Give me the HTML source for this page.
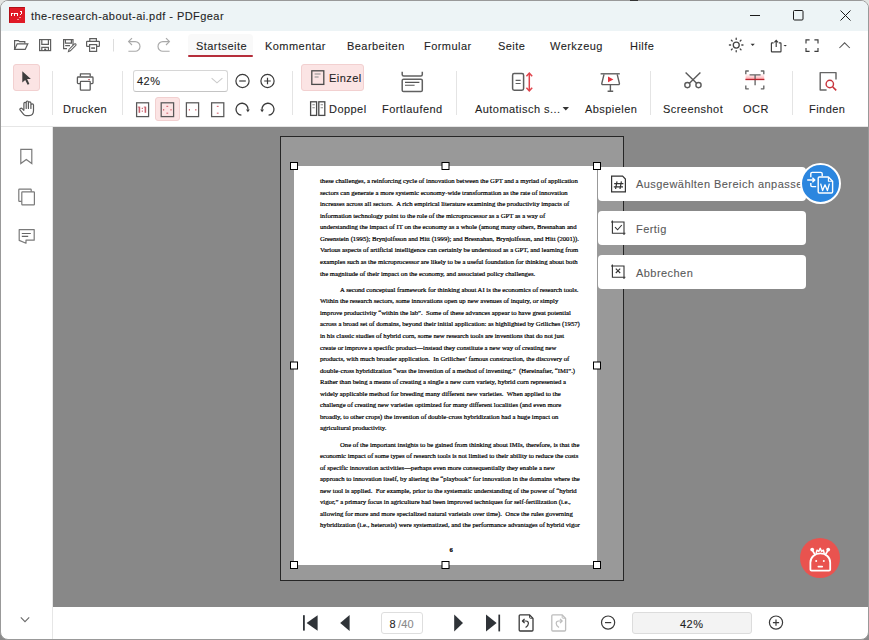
<!DOCTYPE html>
<html><head><meta charset="utf-8">
<style>
*{margin:0;padding:0;box-sizing:border-box}
html,body{width:869px;height:640px;overflow:hidden;background:linear-gradient(#e2e4e2,#e2e4e2 40%,#8a8a8a)}
body{font-family:"Liberation Sans",sans-serif;color:#1a1a1a;position:relative}
.a{position:absolute}
.t{position:absolute;font-size:11px;letter-spacing:0.45px;line-height:14px;white-space:nowrap;color:#1f1f1f;-webkit-text-stroke:0.1px currentColor}
svg{position:absolute;overflow:visible}
.doc{position:absolute;font-family:"Liberation Serif",serif;font-size:6.7px;line-height:8px;white-space:nowrap;color:#000;-webkit-text-stroke:0.2px #000}
</style></head><body>
<!-- window -->
<div class="a" style="left:0;top:0;width:869px;height:640px;background:#fff;border-radius:8px;border:1px solid #999"></div>
<div class="a" style="left:630px;top:0;width:8px;height:1px;background:#333"></div>
<!-- title bar -->
<div class="a" style="left:1px;top:1px;width:867px;height:30px;background:#edf4f6;border-radius:7px 7px 0 0"></div>
<div class="t" style="left:31px;top:9px">the-research-about-ai.pdf - PDFgear</div>

<!-- menu row -->
<div class="a" style="left:188px;top:34px;width:65px;height:22px;background:#f9f9f9;border-radius:4px 4px 0 0"></div>
<div class="t" style="left:196px;top:38.5px">Startseite</div>
<div class="a" style="left:188px;top:55px;width:65px;height:2px;background:#b52d3a;border-radius:1px"></div>
<div class="t" style="left:265px;top:38.5px">Kommentar</div>
<div class="t" style="left:347px;top:38.5px">Bearbeiten</div>
<div class="t" style="left:424px;top:38.5px">Formular</div>
<div class="t" style="left:498px;top:38.5px">Seite</div>
<div class="t" style="left:550px;top:38.5px">Werkzeug</div>
<div class="t" style="left:630px;top:38.5px">Hilfe</div>

<!-- toolbar -->
<div class="a" style="left:13px;top:64px;width:27px;height:27px;background:#fbe4e4;border:1px solid #f2d0d0;border-radius:3px"></div>
<div class="a" style="left:52px;top:71px;width:1px;height:44px;background:#e4e4e4"></div>
<div class="t" style="left:63px;top:102px">Drucken</div>
<div class="a" style="left:122px;top:71px;width:1px;height:44px;background:#e4e4e4"></div>
<div class="a" style="left:133px;top:70px;width:95px;height:22px;border:1px solid #d6d6d6;border-bottom-color:#c4c4c4;border-radius:3px;background:#fff"></div>
<div class="t" style="left:137px;top:74px">42%</div>
<div class="a" style="left:155px;top:97px;width:25px;height:24px;background:#fbe4e4;border:1px solid #f2d0d0;border-radius:3px"></div>
<div class="a" style="left:292px;top:71px;width:1px;height:44px;background:#e4e4e4"></div>
<div class="a" style="left:301px;top:64px;width:63px;height:27px;background:#fbe4e4;border:1px solid #f2d0d0;border-radius:3px"></div>
<div class="t" style="left:329px;top:71px">Einzel</div>
<div class="t" style="left:329px;top:102px">Doppel</div>
<div class="t" style="left:382px;top:102px">Fortlaufend</div>
<div class="a" style="left:456px;top:71px;width:1px;height:44px;background:#e4e4e4"></div>
<div class="t" style="left:475px;top:102px">Automatisch s...</div>
<div class="t" style="left:585px;top:102px">Abspielen</div>
<div class="a" style="left:650px;top:71px;width:1px;height:44px;background:#e4e4e4"></div>
<div class="t" style="left:663px;top:102px">Screenshot</div>
<div class="t" style="left:743px;top:102px">OCR</div>
<div class="a" style="left:792px;top:71px;width:1px;height:44px;background:#e4e4e4"></div>
<div class="t" style="left:809px;top:102px">Finden</div>
<div class="a" style="left:1px;top:126px;width:867px;height:1px;background:#e6e6e6"></div>

<!-- canvas -->
<div class="a" style="left:53px;top:127px;width:815px;height:480px;background:#888"></div>
<div class="a" style="left:52px;top:127px;width:1px;height:512px;background:#e6e6e6"></div>
<!-- page -->
<div class="a" style="left:280px;top:136px;width:344px;height:445px;background:#999;border:1.5px solid #262626"></div>
<div class="a" style="left:294px;top:166px;width:303px;height:399px;background:#fff"></div>
<div class="doc" style="left:320px;top:177.00px">these challenges, a reinforcing cycle of innovation between the GPT and a myriad of application</div>
<div class="doc" style="left:320px;top:188.56px">sectors can generate a more systemic economy-wide transformation as the rate of innovation</div>
<div class="doc" style="left:320px;top:200.12px">increases across all sectors.&nbsp; A rich empirical literature examining the productivity impacts of</div>
<div class="doc" style="left:320px;top:211.69px">information technology point to the role of the microprocessor as a GPT as a way of</div>
<div class="doc" style="left:320px;top:223.25px">understanding the impact of IT on the economy as a whole (among many others, Bresnahan and</div>
<div class="doc" style="left:320px;top:234.81px">Greenstein (1995); Brynjolfsson and Hitt (1999); and Bresnahan, Brynjolfsson, and Hitt (2001)).</div>
<div class="doc" style="left:320px;top:246.38px">Various aspects of artificial intelligence can certainly be understood as a GPT, and learning from</div>
<div class="doc" style="left:320px;top:257.94px">examples such as the microprocessor are likely to be a useful foundation for thinking about both</div>
<div class="doc" style="left:320px;top:269.50px">the magnitude of their impact on the economy, and associated policy challenges.</div>
<div class="doc" style="left:340px;top:285.80px">A second conceptual framework for thinking about AI is the economics of research tools.</div>
<div class="doc" style="left:320px;top:297.35px">Within the research sectors, some innovations open up new avenues of inquiry, or simply</div>
<div class="doc" style="left:320px;top:308.90px">improve productivity &ldquo;within the lab&rdquo;.&nbsp; Some of these advances appear to have great potential</div>
<div class="doc" style="left:320px;top:320.45px">across a broad set of domains, beyond their initial application: as highlighted by Griliches (1957)</div>
<div class="doc" style="left:320px;top:332.00px">in his classic studies of hybrid corn, some new research tools are inventions that do not just</div>
<div class="doc" style="left:320px;top:343.55px">create or improve a specific product&mdash;instead they constitute a new way of creating new</div>
<div class="doc" style="left:320px;top:355.10px">products, with much broader application.&nbsp; In Griliches&rsquo; famous construction, the discovery of</div>
<div class="doc" style="left:320px;top:366.65px">double-cross hybridization &ldquo;was the invention of a method of inventing.&rdquo;&nbsp; (Hereinafter, &ldquo;IMI&rdquo;.)</div>
<div class="doc" style="left:320px;top:378.20px">Rather than being a means of creating a single a new corn variety, hybrid corn represented a</div>
<div class="doc" style="left:320px;top:389.75px">widely applicable method for breeding many different new varieties.&nbsp; When applied to the</div>
<div class="doc" style="left:320px;top:401.30px">challenge of creating new varieties optimized for many different localities (and even more</div>
<div class="doc" style="left:320px;top:412.85px">broadly, to other crops) the invention of double-cross hybridization had a huge impact on</div>
<div class="doc" style="left:320px;top:424.40px">agricultural productivity.</div>
<div class="doc" style="left:340px;top:440.80px">One of the important insights to be gained from thinking about IMIs, therefore, is that the</div>
<div class="doc" style="left:320px;top:452.30px">economic impact of some types of research tools is not limited to their ability to reduce the costs</div>
<div class="doc" style="left:320px;top:463.80px">of specific innovation activities&mdash;perhaps even more consequentially they enable a new</div>
<div class="doc" style="left:320px;top:475.30px">approach to innovation itself, by altering the &ldquo;playbook&rdquo; for innovation in the domains where the</div>
<div class="doc" style="left:320px;top:486.80px">new tool is applied.&nbsp; For example, prior to the systematic understanding of the power of &ldquo;hybrid</div>
<div class="doc" style="left:320px;top:498.30px">vigor,&rdquo; a primary focus in agriculture had been improved techniques for self-fertilization (i.e.,</div>
<div class="doc" style="left:320px;top:509.80px">allowing for more and more specialized natural varietals over time).&nbsp; Once the rules governing</div>
<div class="doc" style="left:320px;top:521.30px">hybridization (i.e., heterosis) were systematized, and the performance advantages of hybrid vigor</div>
<div class="doc" style="left:449.5px;top:546.2px;font-weight:bold">6</div>

<!-- popup buttons -->
<div class="a" style="left:598px;top:167px;width:208px;height:34px;background:#fff;border-radius:4px"></div>
<div class="a" style="left:598px;top:211px;width:208px;height:34px;background:#fff;border-radius:4px"></div>
<div class="a" style="left:598px;top:255px;width:208px;height:34px;background:#fff;border-radius:4px"></div>
<div class="t" style="left:636px;top:177px;color:#5a5a5a">Ausgewählten Bereich anpassen</div>
<div class="t" style="left:636px;top:221.5px;color:#5a5a5a">Fertig</div>
<div class="t" style="left:636px;top:265.5px;color:#5a5a5a">Abbrechen</div>
<div class="a" style="left:800px;top:162.5px;width:41px;height:41px;border-radius:50%;background:#2b86df;border:2px solid #fff"></div>
<div class="a" style="left:800px;top:538px;width:40px;height:40px;border-radius:50%;background:#e9534f"></div>

<!-- bottom bar -->
<div class="a" style="left:381px;top:612px;width:42px;height:22px;border:1px solid #dedede;border-radius:3px"></div>
<div class="t" style="left:389.5px;top:617px">8</div><div class="t" style="left:398px;top:617px;color:#8a8a8a;letter-spacing:0.2px">/40</div>
<div class="a" style="left:632px;top:612px;width:120px;height:22px;border:1px solid #dcdcdc;background:#f3f3f3;border-radius:3px"></div>
<div class="t" style="left:680px;top:617px">42%</div>

<!-- ICONS overlay -->
<svg style="left:0;top:0" width="869" height="640" viewBox="0 0 869 640" fill="none" stroke-linecap="butt" stroke-linejoin="miter">
 <!-- app icon -->
 <rect x="9" y="7" width="16" height="16" fill="#e01a26"/><path d="M9.5 22.5V7.5H24.5" stroke="#b01018" stroke-width="1"/>
 <g fill="#fff"><rect x="11" y="13" width="1" height="3"/><rect x="12" y="13" width="1.5" height="1"/><rect x="14" y="13" width="1" height="3"/><rect x="15" y="13" width="2" height="1"/><rect x="17" y="13" width="1" height="3"/><rect x="20" y="11" width="2" height="1"/><rect x="21" y="12" width="1" height="2"/><rect x="20" y="14" width="1" height="1"/><rect x="17.5" y="19" width="1" height="1"/><rect x="19.5" y="17" width="1" height="1"/></g>
 <!-- window controls -->
 <path d="M750 15.5H760" stroke="#1a1a1a" stroke-width="1"/>
 <rect x="793.5" y="10.5" width="9.5" height="9.5" rx="1" stroke="#1a1a1a" stroke-width="1"/>
 <path d="M840.5 10.5L850.5 20.5M850.5 10.5L840.5 20.5" stroke="#1a1a1a" stroke-width="1"/>

 <!-- menu row icons -->
 <g stroke="#5e5e5e" stroke-width="1.2">
  <path d="M14.6 49.4V40.6H18.4L19.6 41.6H24.8V43.6"/>
  <path d="M14.6 49.4L17.2 43.8H27.8L25.2 49.4Z"/>
  <rect x="39.6" y="39.6" width="11" height="11"/>
  <path d="M41.8 39.6V44.4H48.4V39.6M41.8 50.6V47.4H48.4V50.6"/>
  <path d="M73 45.2V39.6H63.6V48.6H67"/>
  <path d="M65.4 39.6V43.2H71.4V39.6M65.2 45.6H70"/>
  <path d="M68.4 51.6L69 49.4L74.4 44Q75.1 43.4 75.8 44Q76.4 44.7 75.8 45.4L70.4 50.8Z" stroke-width="1.05"/>
  <path d="M89.8 41.4V38.7H96.4V41.4"/>
  <path d="M89.2 46.4H87.2Q86.6 46.4 86.6 45.8V42Q86.6 41.4 87.2 41.4H98.8Q99.4 41.4 99.4 42V45.8Q99.4 46.4 98.8 46.4H96.8"/>
  <rect x="89.6" y="44.6" width="7" height="6.8"/>
 </g>
 <rect x="91.2" y="47.2" width="3.8" height="1.8" fill="#777"/><rect x="44.2" y="48.6" width="2" height="2" fill="#555"/>
 <path d="M113.5 39V51.5" stroke="#ddd" stroke-width="1"/>
 <g stroke="#a9a9a9" stroke-width="1.15">
  <path d="M128.4 51.2H135.2A4.8 4.8 0 0 0 135.2 41.6H128.8"/><path d="M132 38.2L128.6 41.6L132 45"/>
  <path d="M169.6 51.2H162.8A4.8 4.8 0 0 1 162.8 41.6H169.2"/><path d="M166 38.2L169.4 41.6L166 45"/>
 </g>
 <!-- right menu icons -->
 <g stroke="#444" stroke-width="1.3" stroke-linecap="round">
  <circle cx="736.25" cy="45.1" r="3"/>
  <path d="M736.2 38.2V39.4M736.2 50.6V51.8M729.4 45H730.6M741.8 45H743M731.4 40.2L732.2 41M740.2 49L741 49.8M741 40.2L740.2 41M732.2 49L731.4 49.8"/>
 </g>
 <path d="M750.6 43.8H754.8L752.7 46Z" fill="#333"/>
 <g stroke="#3c3c3c" stroke-width="1.15">
  <path d="M773.6 42.9H772Q771.4 42.9 771.4 43.5V51.2Q771.4 51.8 772 51.8H780.4Q781 51.8 781 51.2V43.5Q781 42.9 780.4 42.9H778.8"/>
  <path d="M776.2 47V40.8M774.4 42.4L776.2 40.4L778 42.4"/>
  <path d="M806 43.4V39.8H809.6M814.4 39.8H818V43.4M818 48V51.4H814.4M809.6 51.4H806V48"/>
  <path d="M839.4 48L844.6 42.8L849.8 48" stroke="#555" stroke-width="1.05"/>
 </g>
 <path d="M783.5 44.9H786.9L785.2 46.5Z" fill="#333"/>

 <!-- toolbar left -->
 <path d="M22.3 71.2V82.6L25.2 79.9L27.6 84.8L29.4 83.9L27.1 79.1H30.9Z" fill="#3e3e3e"/>
 <g stroke="#5a5a5a" stroke-width="1.2" stroke-linejoin="round" stroke-linecap="round">
  <path d="M23.9 109.6V103.6Q23.9 102.4 25.05 102.4Q26.2 102.4 26.2 103.6V108.4M26.2 103.6V102.2Q26.2 101 27.3 101Q28.4 101 28.4 102.2V108.4M28.4 103Q28.4 101.9 29.65 101.9Q30.9 101.9 30.9 103V108.4M30.9 105Q30.9 103.8 32.2 103.8Q33.5 103.8 33.5 105V110.5Q33.5 115.6 29 115.6H26Q24.6 115.6 23.6 114.4L20.2 110.2Q19.4 109 20.4 108.4Q21.4 107.8 22.4 108.8L23.9 110.4"/>
 </g>
 <g stroke="#5c5c5c" stroke-width="1.3" stroke-linejoin="round">
  <path d="M80.4 76.6V73.9H90.2V76.6"/>
  <path d="M80.2 83.6H78.2Q77.4 83.6 77.4 82.8V77.8Q77.4 77 78.2 77H92.2Q93 77 93 77.8V82.8Q93 83.6 92.2 83.6H90.4"/>
  <rect x="80.4" y="81.4" width="9.8" height="8.8" rx="0.6"/>
 </g>
 <path d="M88.2 79.6H89.9" stroke="#c0505a" stroke-width="1"/>
 <!-- combo chevron -->
 <path d="M211.6 78.2L217 82.8L222.4 78.2" stroke="#cacaca" stroke-width="1.1"/>
 <g stroke="#3a3a3a" stroke-width="1.2">
  <circle cx="242.5" cy="81" r="6.6"/><path d="M239.2 81H245.8"/>
  <circle cx="267.5" cy="81" r="6.6"/><path d="M264.2 81H270.8M267.5 77.7V84.3"/>
 </g>
 <!-- page fit icons -->
 <g stroke="#585858" stroke-width="1.25">
  <rect x="136.6" y="102.8" width="12" height="13.8"/>
  <rect x="161.2" y="102.8" width="12.4" height="13.8"/>
  <rect x="186.4" y="102.8" width="12.2" height="13.8"/>
  <rect x="211.6" y="102.8" width="12.2" height="13.8"/>
 </g>
 <g fill="#d8707a">
  <g fill="#c8606c"><rect x="138.6" y="106.6" width="1.6" height="6.2"/><rect x="137.8" y="106.6" width="1" height="1"/><rect x="141.7" y="107.8" width="1.3" height="1.1"/><rect x="141.7" y="110.6" width="1.3" height="1.1"/><rect x="144.6" y="106.6" width="1.6" height="6.2"/><rect x="143.8" y="106.6" width="1" height="1"/></g>
  <rect x="166.4" y="105.8" width="1.8" height="1.2"/><rect x="166.4" y="112.6" width="1.8" height="1.2"/>
  <rect x="163" y="109" width="1.2" height="1.6"/><rect x="170.4" y="109" width="1.2" height="1.6"/>
  <rect x="188.8" y="109" width="1.2" height="1.6"/><rect x="195.2" y="109" width="1.2" height="1.6"/>
  <rect x="216.8" y="105.8" width="1.8" height="1.2"/><rect x="216.8" y="112.6" width="1.8" height="1.2"/>
 </g>
 <g stroke="#3a3a3a" stroke-width="1.3">
  <path d="M241.4 115.2A6 6 0 1 1 248 109.6"/>
  <path d="M268.6 115.2A6 6 0 1 0 262 109.6"/>
 </g>
 <path d="M246 109.4H249.8L247.9 112.2ZM260.2 109.4H264L262.1 112.2Z" fill="#3a3a3a"/>
 <!-- Einzel / Doppel -->
 <g stroke="#4a4a4a" stroke-width="1.3">
  <rect x="311.8" y="70.8" width="12" height="13.6"/>
  <rect x="310.6" y="101.8" width="6" height="13.6"/>
  <rect x="318.8" y="101.8" width="6" height="13.6"/>
 </g>
 <g stroke="#8a8a8a" stroke-width="1.1">
  <path d="M314.6 74H320.6M314.6 77H318.6"/>
  <path d="M312.4 104.8H314.8M312.4 107.8H314.8M320.6 104.8H323M320.6 107.8H323"/>
 </g>
 <!-- Fortlaufend -->
 <g stroke="#616161" stroke-width="1.5">
  <path d="M402.2 71.8V74.4Q402.2 75.9 403.7 75.9H420.8Q422.3 75.9 422.3 74.4V71.8"/>
  <rect x="402.2" y="79.2" width="20.1" height="12.4" rx="1.4"/>
 </g>
 <path d="M405 82.4H419.4M405 85.2H414.6" stroke="#555" stroke-width="1.1"/>
 <!-- Auto -->
 <rect x="512.6" y="73.6" width="11" height="16.6" rx="1.6" stroke="#5e5e5e" stroke-width="1.5"/>
 <path d="M515.6 80.3H520.6M515.6 83.5H520.6" stroke="#5e5e5e" stroke-width="1.2"/>
 <g stroke="#e0444c" stroke-width="1.5">
  <path d="M529.3 73.6V90.4"/><path d="M526.4 76.2L529.3 73.2L532.2 76.2M526.4 87.8L529.3 90.8L532.2 87.8"/>
 </g>
 <path d="M562.6 107H569L565.8 110.4Z" fill="#333"/>
 <!-- Abspielen -->
 <g stroke="#5e5e5e" stroke-width="1.4">
  <path d="M600.6 73.8H619.8"/>
  <path d="M604 74.4L601.8 83.4Q601.6 84.6 602.8 84.6H618.4Q619.6 84.6 619.4 83.4L617.2 74.4"/>
  <path d="M610.4 84.6V90.6M607.6 91.2H613.2"/>
 </g>
 <path d="M608 76.6L613.4 79.4L608 82.2Z" fill="#e0343e"/>
 <!-- Screenshot -->
 <g stroke="#5a5a5a" stroke-width="1.4">
  <path d="M685.6 72.4L696.6 83.2M700.4 72.4L689.4 83.2"/>
  <circle cx="687.4" cy="85.1" r="2.6"/><circle cx="698.5" cy="85.1" r="2.6"/>
 </g>
 <!-- OCR -->
 <defs><linearGradient id="og" x1="0" y1="0" x2="0" y2="1"><stop offset="0" stop-color="#ffdfe0" stop-opacity="0.3"/><stop offset="1" stop-color="#ff9ea4"/></linearGradient></defs>
 <rect x="745.6" y="74" width="18.6" height="5.2" fill="url(#og)"/>
 <g stroke="#666" stroke-width="1.35" stroke-linejoin="round">
  <path d="M745.8 74.2V71H748.8M760.8 71H763.8V74.2M763.8 85.6V88.8H760.8M748.8 88.8H745.8V85.6"/>
  <path d="M749.6 74.8H760.6M755.1 75V85.2"/>
 </g>
 <path d="M745.4 79.5H764.4" stroke="#b8262f" stroke-width="1.3"/>
 <!-- Finden -->
 <path d="M836 79.6V72.6H820.2V90H826.6" stroke="#666" stroke-width="1.45" stroke-linejoin="round"/>
 <circle cx="829.8" cy="84" r="3.7" stroke="#c8343c" stroke-width="1.4"/>
 <path d="M832.6 86.8L836.2 90.4" stroke="#c8343c" stroke-width="1.6"/>

 <!-- sidebar -->
 <g stroke="#7a7a7a" stroke-width="1.2">
  <path d="M20.8 149.4H31.8V163.6L26.3 159.6L20.8 163.6Z"/>
  <path d="M21.8 201.4H19.4Q18.8 201.4 18.8 200.8V189.8Q18.8 189.2 19.4 189.2H30.6Q31.2 189.2 31.2 189.8V191.8"/>
  <rect x="21.8" y="191.8" width="12.6" height="13" rx="0.6"/>
  <path d="M19.2 229.6H34.2V240.2H26V243.2L19.2 240.4Z" stroke-linejoin="round"/>
  <path d="M21.8 233.5H30.8M21.8 236.4H28.2" stroke="#666" stroke-width="1.1"/>
  <path d="M20.8 617.4L25 621.6L29.2 617.4" stroke="#6a6a6a" stroke-width="1.1"/>
 </g>

 <!-- page handles -->
 <g fill="#fff" stroke="#000" stroke-width="1">
  <rect x="290.5" y="162.5" width="7" height="7"/><rect x="442" y="162.5" width="7" height="7"/><rect x="593.5" y="162.5" width="7" height="7"/>
  <rect x="290.5" y="362" width="7" height="7"/><rect x="593.5" y="362" width="7" height="7"/>
  <rect x="290.5" y="561.5" width="7" height="7"/><rect x="442" y="561.5" width="7" height="7"/><rect x="593.5" y="561.5" width="7" height="7"/>
 </g>

 <!-- popup icons -->
 <g stroke="#333" stroke-width="1.2">
  <path d="M611.6 176.2H622.6L625.4 179V191.8H611.6Z"/>
  <path d="M617 181.4L615.6 189M621.4 181.4L620 189M614.2 183.6H623.4M613.8 186.8H623"/>
  <path d="M612.4 220.6V233.2H625.4M611 222H624V235" stroke-width="1.1"/>
  <path d="M615 227.2L617.6 229.8L621.8 225" stroke-width="1.1"/>
  <path d="M612.4 264.6V277.2H625.4M611 266H624V279" stroke-width="1.1"/>
  <path d="M615.8 268.6L620.2 273M620.2 268.6L615.8 273" stroke-width="1.1"/>
 </g>
 <!-- blue icon -->
 <g stroke="#fff" stroke-width="1.4" stroke-linejoin="round">
  <path d="M816.2 186.6H812.2Q810.8 186.6 810.8 185.2V183"/>
  <path d="M810.8 177.2V173.8Q810.8 172.4 812.2 172.4H820.8Q822.2 172.4 822.2 173.8V176.2"/>
  <path d="M807.2 180H814.6M812.4 177.8L814.8 180L812.4 182.2"/>
  <path d="M819.4 177H828.4L832.6 181.2V191.8Q832.6 193 831.4 193H819.4Q818.2 193 818.2 191.8V178.2Q818.2 177 819.4 177Z"/>
  <path d="M828.4 177V181.2H832.6" stroke-width="1.1"/>
  <path d="M820.6 183.6L822.6 190.6L825 184.8L827.4 190.6L829.4 183.6" stroke-width="1.3"/>
 </g>
 <!-- robot -->
 <g stroke="#fff" stroke-width="1.8" stroke-linecap="round" stroke-linejoin="round">
  <path d="M810.4 569.4V562.4A9.9 9 0 0 1 830.2 562.4V569.4Q830.2 570.6 829 570.6H811.6Q810.4 570.6 810.4 569.4Z"/>
  <path d="M812.6 550.6L814.8 554.4M827.8 550.6L825.6 554.4"/>
  <path d="M816.2 553.2L817 550.2L818.8 551.4L820.2 548.4L821.6 551.4L823.4 550.2L824.2 553.2" stroke-width="1.5"/>
  <path d="M818.4 566.6H822.2"/>
 </g>
 <g fill="#fff"><circle cx="812.2" cy="549.6" r="1.9"/><circle cx="828.2" cy="549.6" r="1.9"/><circle cx="816.2" cy="561" r="1"/><circle cx="823.8" cy="561" r="1"/></g>

 <!-- bottom bar icons -->
 <g fill="#2f3338">
  <rect x="303" y="615.2" width="1.8" height="15.4"/>
  <path d="M317.6 615.2V630.8L306.6 623Z"/>
  <path d="M349.6 615V631L340.2 623Z"/>
  <path d="M454.2 614.6V631.4L463 623Z"/>
  <path d="M486 614.6V631.4L496.6 623Z"/><rect x="498.4" y="614.6" width="1.7" height="16.8"/>
 </g>
 <g stroke="#3a3a3a" stroke-width="1.3" stroke-linejoin="round">
  <path d="M520.2 614.8H529.4L533 618.4V630Q533 631 532 631H520.2Q519.2 631 519.2 630V615.8Q519.2 614.8 520.2 614.8Z"/>
  <path d="M529.6 615V617.6Q529.6 618.2 530.2 618.2H532.8" stroke-width="1"/>
  <path d="M522.4 621H526Q528.4 621 528.4 623.4Q528.4 625.6 525.6 627.4M524.6 618.8L522.4 621L524.6 623.2" stroke-width="1.2"/>
 </g>
 <g stroke="#bdbdbd" stroke-width="1.3" stroke-linejoin="round">
  <path d="M552.8 614.8H562L565.6 618.4V630Q565.6 631 564.6 631H552.8Q551.8 631 551.8 630V615.8Q551.8 614.8 552.8 614.8Z"/>
  <path d="M562.2 615V617.6Q562.2 618.2 562.8 618.2H565.4" stroke-width="1"/>
  <path d="M562.2 621H558.6Q556.2 621 556.2 623.4Q556.2 625.6 559 627.4M560 618.8L562.2 621L560 623.2" stroke-width="1.2"/>
 </g>
 <g stroke="#3a3a3a" stroke-width="1.2">
  <circle cx="608.1" cy="622.6" r="6.6"/><path d="M605 622.6H611.2"/>
  <circle cx="776" cy="622.6" r="6.6"/><path d="M772.9 622.6H779.1M776 619.5V625.7"/>
 </g>
</svg>
</body></html>
